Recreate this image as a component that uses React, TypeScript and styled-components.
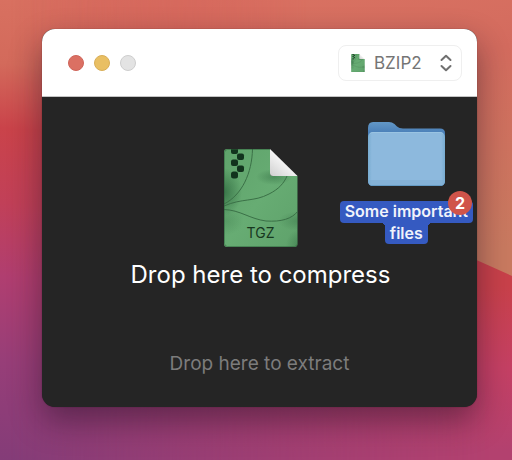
import React, { useState } from "react";
import styled, { createGlobalStyle } from "styled-components";

const GlobalStyle = createGlobalStyle`
  * {
    box-sizing: border-box;
  }
  body {
    margin: 0;
    font-family: Inter, "Liberation Sans", sans-serif;
    -webkit-font-smoothing: antialiased;
  }
`;

const Desktop = styled.div`
  position: relative;
  isolation: isolate;
  display: flex;
  min-height: 100vh;
  padding: 29px 35px 53px 42px;
  overflow: hidden;
  background: linear-gradient(
    184deg,
    #db7463 0%,
    #d36a5b 20%,
    #ca434a 33%,
    #c14058 48%,
    #b03e70 63%,
    #973e78 80%,
    #843c78 100%
  );

  &::before,
  &::after {
    content: "";
    position: absolute;
    z-index: -1;
    inset: 0;
  }
  &::before {
    background: linear-gradient(180deg, #c9414a 62%, #c54064 80%, #b3416f 98%);
    mask-image: linear-gradient(90deg, transparent 2%, #000 96%);
  }
  &::after {
    background: linear-gradient(172deg, #db7463 0%, #d36b5e 22%, #c97a60 60%);
    clip-path: polygon(0 0, 100% 0, 100% 60%, 50% 35%, 0 20%);
    mask-image: linear-gradient(90deg, transparent 6%, #000 60%);
  }
`;

const Window = styled.main`
  position: relative;
  flex: 1;
  display: flex;
  flex-direction: column;
  border-radius: 13px;
  background: #252525;
  box-shadow:
    0 0 1px rgba(0, 0, 0, 0.5),
    0 14px 32px rgba(20, 10, 30, 0.45);
`;

const TitleBar = styled.header`
  display: flex;
  align-items: center;
  justify-content: space-between;
  height: 68px;
  padding: 0 15px 0 26px;
  border-bottom: 1px solid #c4c4c4;
  border-radius: 13px 13px 0 0;
  background: #fff;
`;

const TrafficLights = styled.div`
  display: flex;
  gap: 10px;
`;

const Light = styled.button<{ $fill: string; $edge: string }>`
  width: 16px;
  height: 16px;
  padding: 0;
  border: 1px solid ${(p) => p.$edge};
  border-radius: 50%;
  background: ${(p) => p.$fill};
`;

const FormatPicker = styled.label`
  display: grid;
  grid-template-columns: 36px 1fr 32px;
  align-items: center;
  width: 124px;
  height: 36px;

  svg {
    grid-row: 1;
    z-index: 1;
    pointer-events: none;
  }
  svg:first-child {
    grid-column: 1;
    justify-self: center;
    margin-left: 4px;
  }
  svg:last-child {
    grid-column: 3;
    justify-self: center;
  }
`;

const FormatSelect = styled.select`
  grid-row: 1;
  grid-column: 1 / -1;
  width: 100%;
  height: 36px;
  padding: 0 28px 0 35px;
  appearance: none;
  border: 1px solid #efefef;
  border-radius: 8px;
  background: #fff;
  color: #757575;
  font: 400 17px/20px Inter, "Liberation Sans", sans-serif;
`;

const Stage = styled.div`
  flex: 1;
  display: flex;
  flex-direction: column;
  justify-content: space-between;
`;

const CompressZone = styled.section`
  display: flex;
  flex-direction: column;
  align-items: center;
  gap: 12px;
  padding: 52px 0 0 2px;
`;

const ExtractZone = styled.section`
  padding-bottom: 31px;
  text-align: center;
`;

const CompressText = styled.h1`
  margin: 0;
  color: #fff;
  font-size: 24px;
  font-weight: 400;
  line-height: 32px;
`;

const ExtractText = styled.p`
  margin: 0;
  color: #7c7c7c;
  font-size: 19px;
  line-height: 24px;
`;

const DraggedItem = styled.div`
  position: absolute;
  top: 91px;
  right: 4px;
  display: flex;
  flex-direction: column;
  align-items: center;
  gap: 13px;
`;

const ItemLabel = styled.div`
  position: relative;
  display: flex;
  flex-direction: column;
  align-items: center;
  color: #f1f3fb;
  font-size: 16px;
  font-weight: 600;
  line-height: 21px;
`;

const LabelLine = styled.span<{ $joined?: boolean }>`
  position: relative;
  height: ${(p) => (p.$joined ? 21 : 22)}px;
  padding: 0 5px;
  border-radius: ${(p) => (p.$joined ? "0 0 4px 4px" : "4px")};
  background: #355ac1;

  &::before,
  &::after {
    content: ${(p) => (p.$joined ? '""' : "none")};
    position: absolute;
    top: 0;
    width: 4px;
    height: 4px;
  }
  &::before {
    right: 100%;
    background: radial-gradient(circle at 0 100%, transparent 4px, #355ac1 4px);
  }
  &::after {
    left: 100%;
    background: radial-gradient(circle at 100% 100%, transparent 4px, #355ac1 4px);
  }
`;

const CountBadge = styled.span`
  position: absolute;
  top: -10px;
  right: 1px;
  width: 24px;
  height: 24px;
  border-radius: 50%;
  background: #d0544a;
  color: #fff;
  font-size: 16px;
  font-weight: 700;
  line-height: 24px;
  text-align: center;
`;

function ArchiveIcon({ id, width, height, label }: { id: string; width: number; height: number; label?: string }) {
  const leaf = "M3 0H46V24Q46 27 49 27H73.500V95Q73.500 98 70.500 98H3Q0 98 0 95V3Q0 0 3 0Z";
  return (
    <svg width={width} height={height} viewBox="0 0 74 98" aria-hidden="true">
      <defs>
        <linearGradient id={`${id}-body`} x1="0" y1="0" x2="1" y2="1">
          <stop offset="0" stopColor="#5fa36b" />
          <stop offset="0.5" stopColor="#67ac73" />
          <stop offset="1" stopColor="#5fa26b" />
        </linearGradient>
        <radialGradient id={`${id}-shade`} cx="0.5" cy="0.5" r="0.5">
          <stop offset="0" stopColor="#1e5530" stopOpacity="0.6" />
          <stop offset="1" stopColor="#1e5530" stopOpacity="0" />
        </radialGradient>
        <linearGradient id={`${id}-fold`} x1="0" y1="1" x2="0.5" y2="0.4">
          <stop offset="0" stopColor="#cfcfcf" />
          <stop offset="1" stopColor="#f7f7f7" />
        </linearGradient>
        <clipPath id={`${id}-clip`}>
          <path d={leaf} />
        </clipPath>
      </defs>
      <path d={leaf} fill={`url(#${id}-body)`} />
      <g clipPath={`url(#${id}-clip)`}>
        <ellipse cx="0" cy="43" rx="18" ry="24" fill={`url(#${id}-shade)`} />
        <ellipse cx="76" cy="72" rx="22" ry="10" fill={`url(#${id}-shade)`} opacity="0.5" />
        <ellipse cx="2" cy="72" rx="18" ry="14" fill={`url(#${id}-shade)`} opacity="0.3" />
        <ellipse cx="50" cy="28" rx="18" ry="8" fill={`url(#${id}-shade)`} opacity="0.6" />
        <ellipse cx="76" cy="96" rx="14" ry="16" fill={`url(#${id}-shade)`} opacity="0.6" />
        <g fill="none" stroke="#3b7047" strokeWidth="1">
          <path d="M28.500 0C28 24 18 46 0 55" />
          <path d="M0 57C18 49 30 53 45 45C55 40 60 34 63 27" />
          <path d="M0 60.500C16 61 26 70 42 72C57 73 68 70 74 62" />
        </g>
        <g fill="#12331d">
          <rect x="7" y="-2" width="7" height="7" rx="2" />
          <rect x="13" y="4.500" width="7" height="6.500" rx="2" />
          <rect x="7" y="10.500" width="7" height="6.500" rx="2" />
          <rect x="13" y="16.500" width="7" height="6.500" rx="2" />
          <rect x="7" y="22.500" width="7" height="7" rx="2.500" />
        </g>
        <rect x="0.500" y="0.500" width="73" height="97" rx="3" fill="none" stroke="#2c5f39" strokeOpacity="0.5" />
      </g>
      <path d="M46 0L73.500 27H49Q46 27 46 24Z" fill={`url(#${id}-fold)`} />
      {label && (
        <text x="36.500" y="89" textAnchor="middle" fontFamily="Inter, sans-serif" fontSize="14" fill="#17371f">
          {label}
        </text>
      )}
    </svg>
  );
}

function ChevronsIcon() {
  return (
    <svg width="12" height="18" viewBox="0 0 12 18" aria-hidden="true">
      <path
        d="M1.500 6L6 1.700L10.500 6M1.500 12L6 16.300L10.500 12"
        fill="none"
        stroke="#707070"
        strokeWidth="2"
        strokeLinecap="round"
        strokeLinejoin="round"
      />
    </svg>
  );
}

function FolderIcon() {
  return (
    <svg width="79" height="68" viewBox="0 0 79 68" aria-hidden="true">
      <defs>
        <linearGradient id="folder-back" x1="0" y1="0" x2="0" y2="1">
          <stop offset="0" stopColor="#6297c6" />
          <stop offset="0.17" stopColor="#4a7fb8" />
        </linearGradient>
        <linearGradient id="folder-edge" x1="0" y1="0" x2="1" y2="0">
          <stop offset="0" stopColor="#78acd0" />
          <stop offset="0.05" stopColor="#8db9dd" />
          <stop offset="0.95" stopColor="#8db9dd" />
          <stop offset="1" stopColor="#78acd0" />
        </linearGradient>
      </defs>
      <path
        d="M1 8Q1 2 6 2H22Q25 2 27.500 4L30 6.500Q32 8.500 36 8.500H73Q78 8.500 78 13V61Q78 66 73 66H6Q1 66 1 61Z"
        fill="url(#folder-back)"
      />
      <rect x="1" y="12" width="77" height="54" rx="5" fill="url(#folder-edge)" />
      <path d="M3 13.500Q4 12.500 6 12.500H73Q75 12.500 76 13.500" fill="none" stroke="#a4cbe6" strokeOpacity="0.6" />
      <path d="M1 60H78V61Q78 66 73 66H6Q1 66 1 61Z" fill="#7bacd1" fillOpacity="0.5" />
      <path d="M4 65.500H75" stroke="#659bc4" />
    </svg>
  );
}

export default function App() {
  const [format, setFormat] = useState("BZIP2");
  return (
    <>
      <GlobalStyle />
      <Desktop>
        <Window>
          <TitleBar>
            <TrafficLights>
              <Light aria-label="Close" $fill="#db7063" $edge="#cf655a" />
              <Light aria-label="Minimize" $fill="#e9bf63" $edge="#d9ae57" />
              <Light aria-label="Zoom" disabled $fill="#e3e3e3" $edge="#cecece" />
            </TrafficLights>
            <FormatPicker>
              <ArchiveIcon id="format" width={14} height={18} />
              <FormatSelect
                aria-label="Archive format"
                value={format}
                onChange={(event) => setFormat(event.target.value)}
              >
                <option>BZIP2</option>
              </FormatSelect>
              <ChevronsIcon />
            </FormatPicker>
          </TitleBar>
          <Stage>
            <CompressZone>
              <ArchiveIcon id="archive" width={74} height={98} label="TGZ" />
              <CompressText>Drop here to compress</CompressText>
            </CompressZone>
            <ExtractZone>
              <ExtractText>Drop here to extract</ExtractText>
            </ExtractZone>
          </Stage>
          <DraggedItem>
            <FolderIcon />
            <ItemLabel>
              <LabelLine>Some important</LabelLine>
              <LabelLine $joined>files</LabelLine>
              <CountBadge>2</CountBadge>
            </ItemLabel>
          </DraggedItem>
        </Window>
      </Desktop>
    </>
  );
}
